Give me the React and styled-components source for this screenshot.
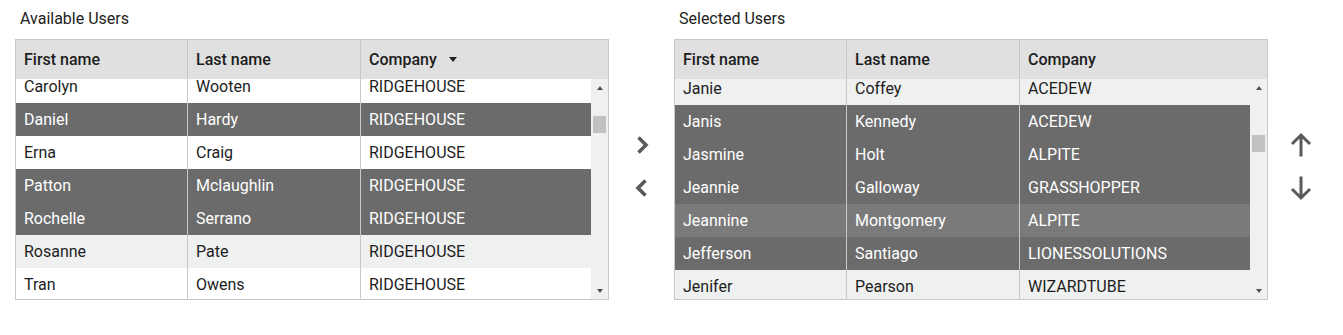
import styled, { createGlobalStyle } from "styled-components";

const GlobalStyle = createGlobalStyle`
  body {
    margin: 0;
    background: #fff;
    font-family: Roboto, "Liberation Sans", sans-serif;
  }
`;

const Page = styled.div`
  display: flex;
  align-items: flex-start;
  padding: 9px 0 0 15px;
`;

const Panel = styled.section`
  width: 594px;
`;

const Title = styled.div`
  font-size: 16px;
  line-height: 20px;
  color: #222;
  padding-left: 5px;
  margin-bottom: 10px;
`;

const Grid = styled.div`
  border: 1px solid #c8c8c8;
  box-sizing: border-box;
`;

const COLS = "172px 173px 1fr";

const HeaderRow = styled.div`
  display: grid;
  grid-template-columns: ${COLS};
  height: 39px;
  background: #e0e0e0;
`;

const HeaderCell = styled.div`
  display: flex;
  align-items: center;
  padding-left: 8px;
  font-size: 16px;
  font-weight: 500;
  color: #1d1d1d;
  border-right: ${(p) => (p.$last ? "none" : "1px solid #c8c8c8")};
  box-sizing: border-box;
`;

const SortArrow = styled.span`
  width: 0;
  height: 0;
  margin-left: 12px;
  border-left: 4.5px solid transparent;
  border-right: 4.5px solid transparent;
  border-top: 5px solid #222;
`;

const Body = styled.div`
  display: flex;
  height: 220px;
`;

const Viewport = styled.div`
  flex: 1;
  overflow: hidden;
`;

const RowList = styled.div`
  margin-top: ${(p) => -p.$offset}px;
`;

const rowBg = (p) => {
  if (p.$hover) return "#7a7a7a";
  if (p.$selected) return "#6b6b6b";
  return p.$alt ? "#eff0f0" : "#ffffff";
};

const Row = styled.div`
  display: grid;
  grid-template-columns: ${COLS};
  height: 33px;
  background: ${rowBg};
  color: ${(p) => (p.$selected ? "#ffffff" : "#1d1d1d")};
`;

const Cell = styled.div`
  display: flex;
  align-items: center;
  padding-left: 8px;
  font-size: 16px;
  border-right: ${(p) => (p.$last ? "none" : "1px solid #c8c8c8")};
  box-sizing: border-box;
  white-space: nowrap;
`;

const ScrollBar = styled.div`
  width: 17px;
  display: flex;
  flex-direction: column;
  background: #f0f0f0;
`;

const ScrollBtn = styled.div`
  height: 17px;
  display: flex;
  align-items: center;
  justify-content: center;
  &::after {
    content: "";
    width: 0;
    height: 0;
    border-left: 3.5px solid transparent;
    border-right: 3.5px solid transparent;
    ${(p) =>
      p.$down
        ? "border-top: 4px solid #505050;"
        : "border-bottom: 4px solid #505050;"}
  }
`;

const Track = styled.div`
  flex: 1;
`;

const Thumb = styled.div`
  width: 13px;
  height: 17px;
  margin: ${(p) => p.$top}px auto 0;
  background: #c1c1c1;
`;

const ButtonColumn = styled.div`
  width: 65px;
  display: flex;
  flex-direction: column;
  align-items: center;
  gap: 11px;
  padding-top: 120px;
`;

const IconButton = styled.button`
  width: 32px;
  height: 32px;
  padding: 0;
  border: 0;
  background: transparent;
  display: flex;
  align-items: center;
  justify-content: center;
  color: #5a5a5a;
  cursor: pointer;
`;

const Chevron = ({ left }) => (
  <svg width="20" height="24" viewBox="0 0 20 24">
    <polyline
      points={left ? "13.5,4.5 6,12 13.5,19.5" : "6.5,4.5 14,12 6.5,19.5"}
      fill="none"
      stroke="currentColor"
      strokeWidth="3.6"
    />
  </svg>
);

const Arrow = ({ down }) => (
  <svg width="24" height="26" viewBox="0 0 24 26" style={down ? { transform: "rotate(180deg)" } : undefined}>
    <path d="M12 3V24.5M3 12L12 3L21 12" fill="none" stroke="currentColor" strokeWidth="3" />
  </svg>
);

const available = [
  { first: "Carolyn", last: "Wooten", company: "RIDGEHOUSE" },
  { first: "Daniel", last: "Hardy", company: "RIDGEHOUSE", selected: true },
  { first: "Erna", last: "Craig", company: "RIDGEHOUSE" },
  { first: "Patton", last: "Mclaughlin", company: "RIDGEHOUSE", selected: true },
  { first: "Rochelle", last: "Serrano", company: "RIDGEHOUSE", selected: true },
  { first: "Rosanne", last: "Pate", company: "RIDGEHOUSE" },
  { first: "Tran", last: "Owens", company: "RIDGEHOUSE" },
];

const chosen = [
  { first: "Janie", last: "Coffey", company: "ACEDEW" },
  { first: "Janis", last: "Kennedy", company: "ACEDEW", selected: true },
  { first: "Jasmine", last: "Holt", company: "ALPITE", selected: true },
  { first: "Jeannie", last: "Galloway", company: "GRASSHOPPER", selected: true },
  { first: "Jeannine", last: "Montgomery", company: "ALPITE", selected: true, hover: true },
  { first: "Jefferson", last: "Santiago", company: "LIONESSOLUTIONS", selected: true },
  { first: "Jenifer", last: "Pearson", company: "WIZARDTUBE" },
];

function UserGrid({ title, rows, offset, altStart, thumbTop, sorted }) {
  return (
    <Panel>
      <Title>{title}</Title>
      <Grid>
        <HeaderRow>
          <HeaderCell>First name</HeaderCell>
          <HeaderCell>Last name</HeaderCell>
          <HeaderCell $last>
            Company
            {sorted && <SortArrow />}
          </HeaderCell>
        </HeaderRow>
        <Body>
          <Viewport>
            <RowList $offset={offset}>
              {rows.map((r, i) => (
                <Row
                  key={r.first}
                  $alt={(i + altStart) % 2 === 1}
                  $selected={r.selected}
                  $hover={r.hover}
                >
                  <Cell>{r.first}</Cell>
                  <Cell>{r.last}</Cell>
                  <Cell $last>{r.company}</Cell>
                </Row>
              ))}
            </RowList>
          </Viewport>
          <ScrollBar>
            <ScrollBtn />
            <Track>
              <Thumb $top={thumbTop} />
            </Track>
            <ScrollBtn $down />
          </ScrollBar>
        </Body>
      </Grid>
    </Panel>
  );
}

export default function App() {
  return (
    <>
      <GlobalStyle />
      <Page>
        <UserGrid title="Available Users" rows={available} offset={9} altStart={0} thumbTop={20} sorted />
        <ButtonColumn>
          <IconButton title="Add">
            <Chevron />
          </IconButton>
          <IconButton title="Remove">
            <Chevron left />
          </IconButton>
        </ButtonColumn>
        <UserGrid title="Selected Users" rows={chosen} offset={7} altStart={1} thumbTop={39} />
        <ButtonColumn>
          <IconButton title="Move up">
            <Arrow />
          </IconButton>
          <IconButton title="Move down">
            <Arrow down />
          </IconButton>
        </ButtonColumn>
      </Page>
    </>
  );
}
